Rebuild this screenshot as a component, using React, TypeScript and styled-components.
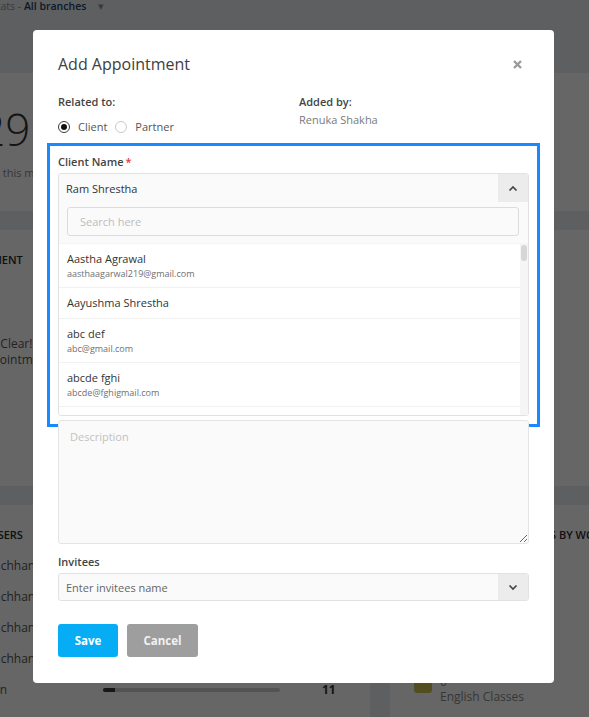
import React from 'react'
import styled, { createGlobalStyle } from 'styled-components'

const GlobalStyle = createGlobalStyle`
  html, body {
    margin: 0;
    padding: 0;
  }
  body {
    width: 589px;
    height: 717px;
    overflow: hidden;
    background: #eceef1;
    font-family: "Open Sans", "Liberation Sans", sans-serif;
  }
  * {
    box-sizing: border-box;
  }
`

/* ---------- dashboard behind the modal ---------- */

const Dashboard = styled.div`
  margin-left: -90px;
  width: 900px;
`

const TopBar = styled.div`
  height: 73px;
  padding-left: 81px;
  display: flex;
  align-items: flex-start;
  gap: 12px;
  font-size: 10.5px;
  line-height: 12px;
  color: #8c9197;
`

const Branch = styled.span`
  color: #1d3f66;
  font-weight: 600;
`

const DashGrid = styled.div`
  display: grid;
  grid-template-columns: 460px 420px;
  grid-template-rows: 138px 256px 230px;
  gap: 19px 20px;
`

const Card = styled.div`
  background: #fff;
  padding: 22px 20px;
  color: #333;
`

const BigNumber = styled.div`
  font-size: 44px;
  font-weight: 300;
  line-height: 52px;
  margin-top: 8px;
`

const Muted = styled.div`
  font-size: 11px;
  color: #8a8a8a;
  margin-top: 10px;
`

const CardTitle = styled.div<{ $indent?: number }>`
  font-size: 11px;
  font-weight: 600;
  text-transform: uppercase;
  white-space: nowrap;
  padding-left: ${(p) => p.$indent ?? 0}px;
  color: #2b2b2b;
`

const EmptyState = styled.div`
  margin-top: 69px;
  width: 150px;
  margin-left: 3px;
  text-align: center;
  font-size: 12px;
  line-height: 16px;
  color: #555;
`

const UserList = styled.div`
  margin-top: 8px;
  display: flex;
  flex-direction: column;
`

const UserRow = styled.div`
  height: 31px;
  display: grid;
  grid-template-columns: 166px 177px 42px auto;
  align-items: center;
  font-size: 12px;
  color: #555;
  padding-left: 7px;
`

const Track = styled.div`
  height: 4px;
  background: #cfcfcf;
  border-radius: 2px;
  overflow: hidden;
`

const Fill = styled.div`
  height: 100%;
  background: #3a3a3a;
`

const Count = styled.span`
  font-weight: 700;
  color: #333;
`

const Legend = styled.div`
  margin-top: 132px;
  display: flex;
  gap: 8px;
  align-items: flex-start;
  padding-left: 4px;
`

const Swatch = styled.div`
  width: 18px;
  height: 17px;
  border-radius: 3px;
  background: #ccc455;
  margin-top: 2px;
`

const LegendText = styled.div`
  display: flex;
  flex-direction: column;
  font-size: 12px;
  line-height: 15px;
  color: #8a8a8a;
`

/* ---------- modal ---------- */

const Overlay = styled.div`
  position: fixed;
  inset: 0;
  background: rgba(0, 0, 0, 0.6);
  display: flex;
  justify-content: center;
  align-items: flex-start;
  padding: 30px 2px 0 0;
`

const Modal = styled.div`
  width: 521px;
  background: #fff;
  border-radius: 4px;
  padding: 22px 25px 26px;
  display: flex;
  flex-direction: column;
  color: #444;
`

const Header = styled.div`
  height: 24px;
  display: flex;
  align-items: center;
  justify-content: space-between;
`

const Title = styled.h2`
  margin: 0;
  font-size: 16px;
  font-weight: 500;
  color: #404040;
  line-height: 24px;
`

const Close = styled.button`
  border: 0;
  background: none;
  padding: 0;
  margin-right: 7px;
  display: flex;
`

const MetaRow = styled.div`
  margin-top: 18px;
  display: grid;
  grid-template-columns: 241px 1fr;
`

const Label = styled.div`
  font-size: 11px;
  line-height: 16px;
  font-weight: 600;
  color: #444;
`

const Required = styled.span`
  color: #e53935;
  margin-left: 2px;
`

const Value = styled.div`
  font-size: 11px;
  line-height: 16px;
  color: #7a7a7a;
  margin-top: 2px;
`

const Radios = styled.div`
  margin-top: 9px;
  display: flex;
  align-items: center;
  gap: 8px;
  font-size: 11px;
  color: #555;
`

const RadioOption = styled.label`
  display: flex;
  align-items: center;
  gap: 8px;
  line-height: 16px;
`

const RadioDot = styled.span<{ $on?: boolean }>`
  width: 12px;
  height: 12px;
  border-radius: 50%;
  border: 1px solid ${(p) => (p.$on ? '#3a3a3a' : '#c9c9c9')};
  display: flex;
  align-items: center;
  justify-content: center;
  &::after {
    content: '';
    width: 6px;
    height: 6px;
    border-radius: 50%;
    background: ${(p) => (p.$on ? '#111' : 'transparent')};
  }
`

const ClientSection = styled.section`
  margin-top: 19px;
  outline: 3px solid #1a88ff;
  outline-offset: 8px;
`

const SelectBox = styled.div`
  margin-top: 3px;
  border: 1px solid #e2e2e2;
  border-radius: 3px;
  background: #fafafa;
  overflow: hidden;
`

const SelectHead = styled.div<{ $h?: number }>`
  height: ${(p) => p.$h ?? 28}px;
  display: flex;
  align-items: stretch;
`

const SelectValue = styled.div<{ $placeholder?: boolean }>`
  flex: 1;
  display: flex;
  align-items: center;
  padding-left: 7px;
  font-size: 11px;
  color: ${(p) => (p.$placeholder ? '#666' : '#333')};
`

const ArrowBtn = styled.div`
  width: 30px;
  background: #ececec;
  display: flex;
  align-items: center;
  justify-content: center;
`

const SearchArea = styled.div`
  padding: 5px 9px 7px 8px;
`

const SearchInput = styled.div`
  height: 29px;
  border: 1px solid #dcdcdc;
  border-radius: 3px;
  background: #fafafa;
  display: flex;
  align-items: center;
  padding-left: 12px;
  font-size: 11px;
  color: #bdbdbd;
`

const ListArea = styled.div`
  height: 172px;
  display: flex;
  background: #fff;
  border-top: 1px solid #f4f4f4;
`

const Items = styled.div`
  flex: 1;
  overflow: hidden;
`

const Item = styled.div`
  padding: 7px 8px;
  border-bottom: 1px solid #f1f1f1;
`

const ItemName = styled.div`
  font-size: 11px;
  line-height: 16px;
  color: #333;
`

const ItemEmail = styled.div`
  font-size: 9px;
  line-height: 13px;
  color: #6f6f6f;
`

const ScrollTrack = styled.div`
  width: 8px;
  background: #f5f5f5;
  padding: 1px 1px;
`

const ScrollThumb = styled.div`
  height: 16px;
  border-radius: 3px;
  background: #d6d6d6;
`

const Description = styled.textarea`
  margin-top: 4px;
  height: 124px;
  border: 1px solid #e4e4e4;
  border-radius: 3px;
  background: #fafafa;
  padding: 8px 11px;
  font-family: inherit;
  font-size: 11px;
  color: #333;
  resize: vertical;
  outline: none;
  &::placeholder {
    color: #c2c2c2;
  }
`

const InviteesLabel = styled(Label)`
  margin-top: 10px;
`

const Actions = styled.div`
  margin-top: 23px;
  display: flex;
  gap: 9px;
`

const Button = styled.button<{ $variant: 'primary' | 'muted' }>`
  height: 33px;
  padding: 0;
  width: ${(p) => (p.$variant === 'primary' ? '60px' : '71px')};
  border: 0;
  border-radius: 3px;
  background: ${(p) => (p.$variant === 'primary' ? '#06adf5' : '#9e9e9e')};
  color: ${(p) => (p.$variant === 'primary' ? '#fff' : '#f2f2f2')};
  font-family: inherit;
  font-size: 11.5px;
  font-weight: 700;
`

const Chevron = ({ up }: { up?: boolean }) => (
  <svg width="10" height="7" viewBox="0 0 10 7">
    <path
      d={up ? 'M1.5 5.5 L5 2 L8.5 5.5' : 'M1.5 1.5 L5 5 L8.5 1.5'}
      fill="none"
      stroke="#444"
      strokeWidth="1.7"
    />
  </svg>
)

const clients = [
  { name: 'Aastha Agrawal', email: 'aasthaagarwal219@gmail.com' },
  { name: 'Aayushma Shrestha' },
  { name: 'abc def', email: 'abc@gmail.com' },
  { name: 'abcde fghi', email: 'abcde@fghigmail.com' },
  { name: 'abhishek karki', email: 'abhishek@gmail.com' },
]

const users = [
  { name: 'Sushil Bachchhane', pct: 40 },
  { name: 'Sushil Bachchhane', pct: 30 },
  { name: 'Sushil Bachchhane', pct: 20 },
  { name: 'Sushil Bachchhane', pct: 12 },
  { name: 'Ramesh Pun', pct: 7, count: 11 },
]

const App = () => (
  <>
    <GlobalStyle />
    <Dashboard>
      <TopBar>
        <span>
          Stats - <Branch>All branches</Branch>
        </span>
        <span>▾</span>
      </TopBar>
      <DashGrid>
        <Card>
          <BigNumber>1229</BigNumber>
          <Muted>Clients added this month</Muted>
        </Card>
        <Card />
        <Card>
          <CardTitle $indent={14}>Appointment</CardTitle>
          <EmptyState>
            All Clear!
            <br />
            No appointments
          </EmptyState>
        </Card>
        <Card />
        <Card>
          <CardTitle $indent={35}>Top Users</CardTitle>
          <UserList>
            {users.map((u, i) => (
              <UserRow key={i}>
                <span>{u.name}</span>
                <Track>
                  <Fill style={{ width: `${u.pct}%` }} />
                </Track>
                <span />
                <Count>{u.count ?? ''}</Count>
              </UserRow>
            ))}
          </UserList>
        </Card>
        <Card>
          <CardTitle $indent={22}>Client Registrations by Workflow</CardTitle>
          <Legend>
            <Swatch />
            <LegendText>
              <span>0</span>
              <span>English Classes</span>
            </LegendText>
          </Legend>
        </Card>
      </DashGrid>
    </Dashboard>

    <Overlay>
      <Modal>
        <Header>
          <Title>Add Appointment</Title>
          <Close aria-label="close">
            <svg width="9" height="9" viewBox="0 0 9 9">
              <path d="M1 1 L8 8 M8 1 L1 8" stroke="#9a9a9a" strokeWidth="2.4" />
            </svg>
          </Close>
        </Header>

        <MetaRow>
          <div>
            <Label>Related to:</Label>
            <Radios>
              <RadioOption>
                <RadioDot $on />
                Client
              </RadioOption>
              <RadioOption>
                <RadioDot />
                Partner
              </RadioOption>
            </Radios>
          </div>
          <div>
            <Label>Added by:</Label>
            <Value>Renuka Shakha</Value>
          </div>
        </MetaRow>

        <ClientSection>
          <Label>
            Client Name<Required>*</Required>
          </Label>
          <SelectBox>
            <SelectHead>
              <SelectValue>Ram Shrestha</SelectValue>
              <ArrowBtn>
                <Chevron up />
              </ArrowBtn>
            </SelectHead>
            <SearchArea>
              <SearchInput>Search here</SearchInput>
            </SearchArea>
            <ListArea>
              <Items>
                {clients.map((c) => (
                  <Item key={c.name}>
                    <ItemName>{c.name}</ItemName>
                    {c.email && <ItemEmail>{c.email}</ItemEmail>}
                  </Item>
                ))}
              </Items>
              <ScrollTrack>
                <ScrollThumb />
              </ScrollTrack>
            </ListArea>
          </SelectBox>
        </ClientSection>

        <Description placeholder="Description" />

        <InviteesLabel>Invitees</InviteesLabel>
        <SelectBox>
          <SelectHead $h={26}>
            <SelectValue $placeholder>Enter invitees name</SelectValue>
            <ArrowBtn>
              <Chevron />
            </ArrowBtn>
          </SelectHead>
        </SelectBox>

        <Actions>
          <Button $variant="primary">Save</Button>
          <Button $variant="muted">Cancel</Button>
        </Actions>
      </Modal>
    </Overlay>
  </>
)

export default App
